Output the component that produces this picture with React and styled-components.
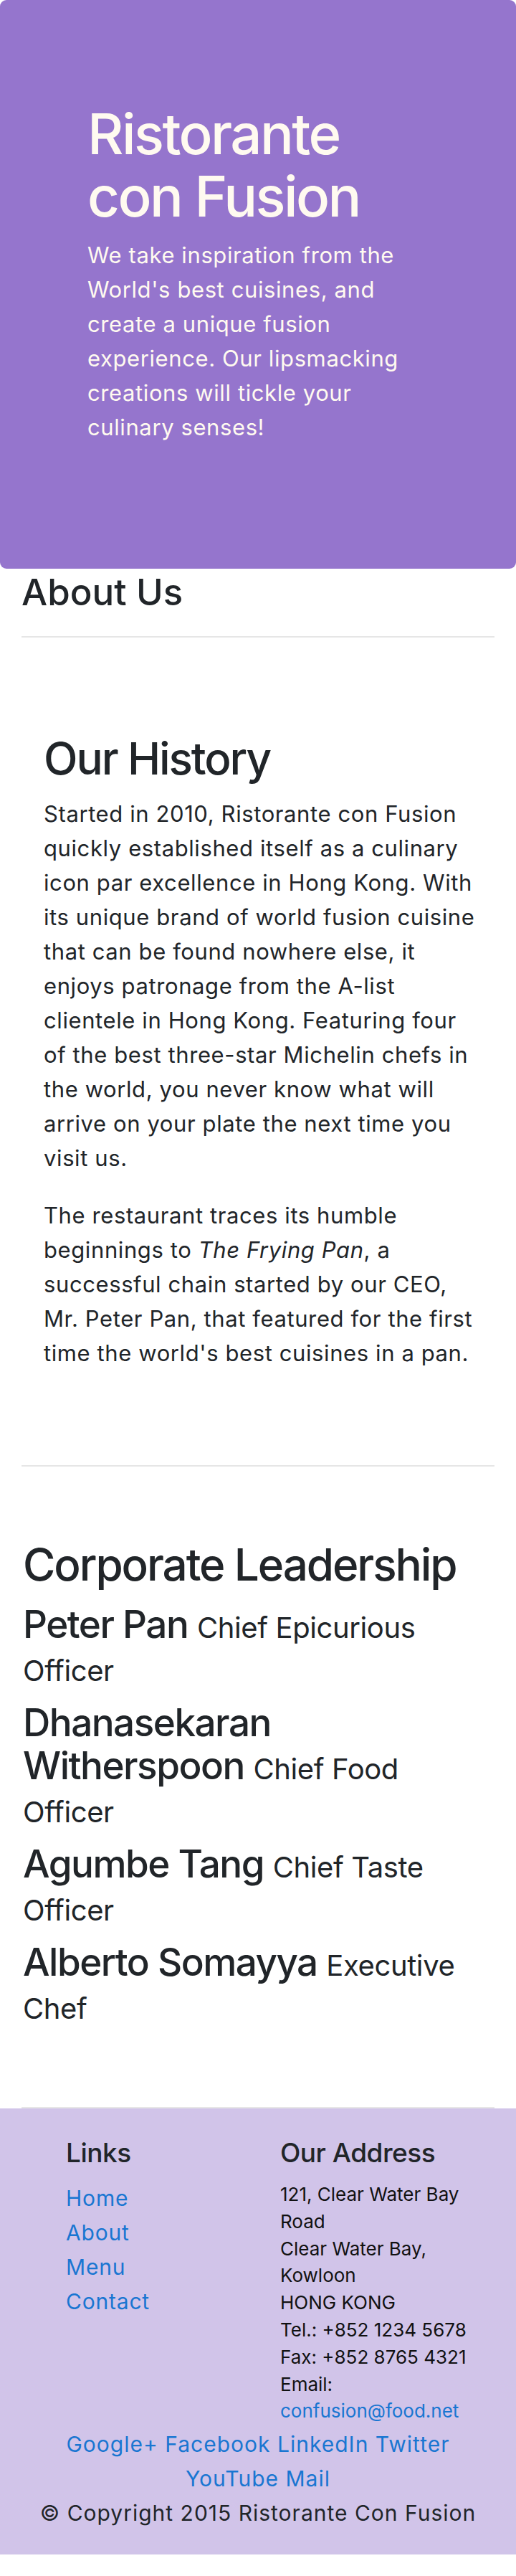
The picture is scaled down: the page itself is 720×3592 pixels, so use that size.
import styled, { createGlobalStyle } from 'styled-components';

const GlobalStyle = createGlobalStyle`
  * { box-sizing: border-box; }
  body {
    margin: 0;
    background: #fff;
    color: #212529;
    font-family: Inter, "Noto Sans", "Liberation Sans", sans-serif;
  }
`

const Jumbotron = styled.header`
  background: #9575cd;
  color: #fffaf0;
  border-radius: 9px;
  padding: 143px 122px 173px;
`
const Brand = styled.h1`
  margin: 0;
  font-size: 78px;
  font-weight: 500;
  line-height: 87px;
  letter-spacing: -2.6px;
`
const Lead = styled.p`
  margin: 15px 0 0;
  font-size: 31px;
  line-height: 48px;
  letter-spacing: 0.6px;
`

const Container = styled.main`
  padding: 0 30px;
`
const PageTitle = styled.h3`
  margin: 2px 0 0;
  font-size: 51px;
  font-weight: 500;
  line-height: 61px;
`
const Rule = styled.hr`
  margin: 31px 0 32px;
  border: 0;
  border-top: 2px solid #e6e6e6;
`
const Section = styled.section`
  padding: 100px ${p => p.$indent ? '26px' : '0'} ${p => p.$bottom}px ${p => p.$indent ? '31px' : '2px'};
  border-bottom: 2px solid #e6e6e6;
`
const SectionTitle = styled.h2`
  margin: 0 0 16px;
  font-size: 62px;
  font-weight: 500;
  line-height: 74px;
  letter-spacing: -2.1px;
`
const Text = styled.p`
  margin: 0 0 32px;
  font-size: 31px;
  line-height: 48px;
  letter-spacing: 0.6px;
`
const Leader = styled.h4`
  margin: 0 0 17px;
  font-size: 53px;
  font-weight: 500;
  line-height: 60px;
  letter-spacing: -1.5px;
`
const Role = styled.small`
  font-size: 40px;
  font-weight: 400;
  line-height: 1;
  letter-spacing: -0.4px;
`

const Footer = styled.footer`
  background: #d1c4e9;
  padding: 39px 0 2px;
`
const FooterRow = styled.div`
  display: grid;
  grid-template-columns: 299px 1fr;
  padding: 0 30px 0 92px;
`
const FooterTitle = styled.h5`
  margin: 0 0 16px;
  font-size: 37px;
  font-weight: 500;
  line-height: 46px;
  letter-spacing: -0.5px;
`
const LinkList = styled.ul`
  list-style: none;
  margin: 0;
  padding: 0;
  font-size: 30px;
  line-height: 48px;
  letter-spacing: 0.8px;
`
const Link = styled.a`
  color: #1976d2;
  text-decoration: none;
`
const Address = styled.address`
  max-width: 286px;
  font-style: normal;
  font-size: 26px;
  line-height: 37.8px;
  color: #111;
`
const Social = styled.div`
  padding: 3px 60px 0;
  text-align: center;
  font-size: 30px;
  line-height: 48px;
  letter-spacing: 1px;
`
const Copyright = styled.p`
  margin: 0 0 32px;
  text-align: center;
  font-size: 30px;
  line-height: 48px;
  letter-spacing: 1px;
`

const leaders = [
  { name: 'Peter Pan', role: 'Chief Epicurious Officer' },
  { name: 'Dhanasekaran Witherspoon', role: 'Chief Food Officer' },
  { name: 'Agumbe Tang', role: 'Chief Taste Officer' },
  { name: 'Alberto Somayya', role: 'Executive Chef' },
]

const socials = ['Google+', 'Facebook', 'LinkedIn', 'Twitter', 'YouTube', 'Mail']

const App = () => {
  return (
    <div>
      <GlobalStyle />
      <Jumbotron>
        <Brand>Ristorante con Fusion</Brand>
        <Lead>
          We take inspiration from the World's best cuisines, and create a unique fusion
          experience. Our lipsmacking creations will tickle your culinary senses!
        </Lead>
      </Jumbotron>

      <Container>
        <PageTitle>About Us</PageTitle>
        <Rule />

        <Section $indent $bottom={100}>
          <SectionTitle>Our History</SectionTitle>
          <Text>
            Started in 2010, Ristorante con Fusion quickly established itself as a culinary icon
            par excellence in Hong Kong. With its unique brand of world fusion cuisine that can be
            found nowhere else, it enjoys patronage from the A-list clientele in Hong Kong.
            Featuring four of the best three-star Michelin chefs in the world, you never know what
            will arrive on your plate the next time you visit us.
          </Text>
          <Text>
            The restaurant traces its humble beginnings to <em>The Frying Pan</em>, a successful
            chain started by our CEO, Mr. Peter Pan, that featured for the first time the world's
            best cuisines in a pan.
          </Text>
        </Section>

        <Section $bottom={95}>
          <SectionTitle>Corporate Leadership</SectionTitle>
          {leaders.map(l => (
            <Leader key={l.name}>
              {l.name} <Role>{l.role}</Role>
            </Leader>
          ))}
        </Section>
      </Container>

      <Footer>
        <FooterRow>
          <div>
            <FooterTitle>Links</FooterTitle>
            <LinkList>
              <li><Link href="#">Home</Link></li>
              <li><Link href="#">About</Link></li>
              <li><Link href="#">Menu</Link></li>
              <li><Link href="#">Contact</Link></li>
            </LinkList>
          </div>
          <div>
            <FooterTitle>Our Address</FooterTitle>
            <Address>
              121, Clear Water Bay Road<br />
              Clear Water Bay, Kowloon<br />
              HONG KONG<br />
              Tel.: +852 1234 5678<br />
              Fax: +852 8765 4321<br />
              Email: <Link href="#">confusion@food.net</Link>
            </Address>
          </div>
        </FooterRow>
        <Social>
          {socials.map(s => <Link key={s} href="#">{s} </Link>)}
        </Social>
        <Copyright>© Copyright 2015 Ristorante Con Fusion</Copyright>
      </Footer>
    </div>
  )
}

export default App
